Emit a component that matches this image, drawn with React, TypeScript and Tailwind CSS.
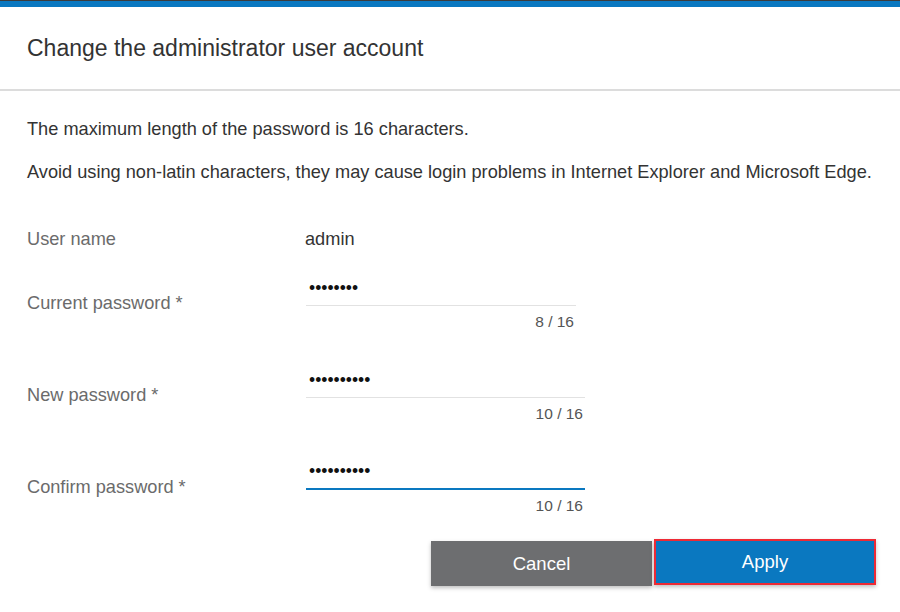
import React from 'react';

const font = { fontFamily: '"Liberation Sans", Arial, sans-serif' };

type FieldProps = {
  label: string;
  value: string;
  width: string;
  focused?: boolean;
};

// Password row: label on the left, underlined input and counter on the right
function PasswordField({ label, value, width, focused }: FieldProps) {
  return (
    <div className="grid grid-cols-[279px_1fr] items-center">
      <div className="pt-[4px] text-[18.2px] leading-[24px] text-[#6b6b6b]">{label}</div>
      <div className={`flex flex-col ${width}`}>
        <input
          type="password"
          readOnly
          value={value}
          className={`h-[35px] w-full bg-transparent pl-[3px] text-[17.5px] text-[#111] outline-none ${
            focused ? 'border-b-2 border-[#0a78c0]' : 'border-b border-[#e2e2e2]'
          }`}
        />
        <div className="mt-[7px] pr-[2px] text-right text-[15.5px] leading-[18px] text-[#555]">
          {value.length} / 16
        </div>
      </div>
    </div>
  );
}

export default function App() {
  return (
    <div className="min-h-[612px] w-[900px] bg-white" style={font}>
      {/* Top bar */}
      <div className="h-[7px] border-t border-[#3c3c3c] bg-[#0a78c0]" />

      {/* Header */}
      <div className="border-b-2 border-[#dcdcdc] px-[27px] pb-[27px] pt-[27px]">
        <h1 className="text-[23px] leading-[28px] text-[#333]">Change the administrator user account</h1>
      </div>

      {/* Body */}
      <div className="pl-[27px] pr-[24px] pt-[26px]">
        <p className="whitespace-nowrap text-[18.2px] leading-[24px] text-[#333]">
          The maximum length of the password is 16 characters.
        </p>
        <p className="mt-[19px] whitespace-nowrap text-[18.2px] leading-[24px] text-[#333]">
          Avoid using non-latin characters, they may cause login problems in Internet Explorer and Microsoft Edge.
        </p>

        <div className="mt-[43px] grid grid-cols-[278px_1fr] items-center">
          <div className="text-[18.2px] leading-[24px] text-[#6b6b6b]">User name</div>
          <div className="text-[18.2px] leading-[24px] text-[#333]">admin</div>
        </div>

        <div className="mt-[20px] flex flex-col gap-[32px]">
          <PasswordField label="Current password *" value="12345678" width="w-[270px]" />
          <PasswordField label="New password *" value="1234567890" width="w-[279px]" />
          <PasswordField label="Confirm password *" value="1234567890" width="w-[279px]" focused />
        </div>

        {/* Actions */}
        <div className="mt-[24px] flex items-start justify-end gap-[2px]">
          <button className="mt-[2px] h-[45px] w-[221px] bg-[#6d6e70] text-[18.5px] text-white shadow-[0_2px_4px_rgba(0,0,0,0.25)]">
            Cancel
          </button>
          <button className="h-[46px] w-[222px] border-2 border-[#ee2a35] bg-[#0a78c0] text-[18.5px] text-white shadow-[0_2px_4px_rgba(0,0,0,0.25)]">
            Apply
          </button>
        </div>
      </div>
    </div>
  );
}
